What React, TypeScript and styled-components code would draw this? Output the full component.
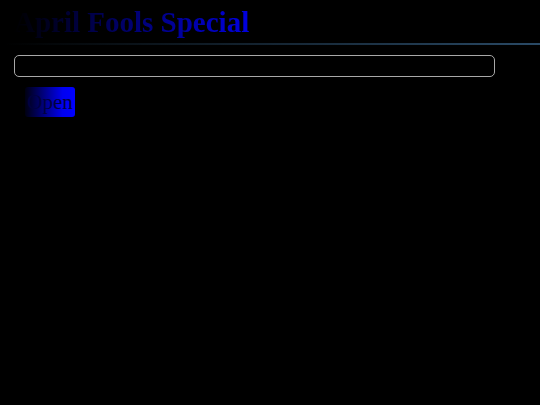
import styled, { createGlobalStyle } from "styled-components";

const GlobalStyle = createGlobalStyle`
  html, body {
    margin: 0;
    padding: 0;
    background: #000;
  }
  body {
    font-family: "Liberation Serif", "Times New Roman", serif;
  }
`

const Page = styled.div`
  display: flex;
  flex-direction: column;
  padding: 0 0 0 14px;
`

const Title = styled.h1`
  margin: 0;
  padding-top: 4px;
  font-size: 29px;
  line-height: 36px;
  font-weight: bold;
  width: fit-content;
  background: linear-gradient(90deg, #000000 0%, #0000e0 100%);
  -webkit-background-clip: text;
  background-clip: text;
  color: transparent;
`

const Rule = styled.div`
  height: 2px;
  margin: 3px 0 0 -10px;
  background: linear-gradient(90deg, rgba(40, 80, 110, 0) 0%, #2a4a66 100%);
`

const Field = styled.input`
  box-sizing: border-box;
  width: 481px;
  height: 22px;
  margin-top: 10px;
  border: 1.5px solid #a8a8a8;
  border-radius: 5px;
  background: #000;
  color: #fff;
  outline: none;
`

const OpenButton = styled.button`
  align-self: flex-start;
  margin: 10px 0 0 11px;
  width: 50px;
  height: 30px;
  padding: 0;
  border: none;
  border-radius: 3px;
  background: linear-gradient(90deg, #000010 0%, #0000f0 75%, #0000ff 100%);
  color: #000040;
  font-family: "Liberation Serif", "Times New Roman", serif;
  font-size: 21px;
  cursor: pointer;
`

export default function App() {
  return (
    <>
      <GlobalStyle />
      <Page>
        <Title>April Fools Special</Title>
        <Rule />
        <Field type="text" />
        <OpenButton>Open</OpenButton>
      </Page>
    </>
  )
}
